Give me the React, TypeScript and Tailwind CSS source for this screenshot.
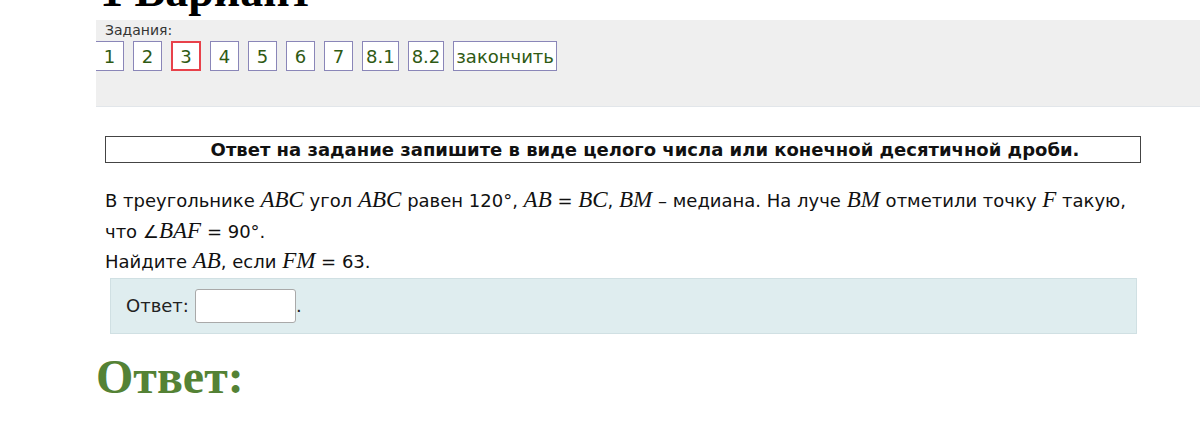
import React from 'react';

const tasks = ['1', '2', '3', '4', '5', '6', '7', '8.1', '8.2'];

function M({ children }: { children: React.ReactNode }) {
  return <i className="font-['Liberation_Serif',serif] text-[23px]">{children}</i>;
}

export default function App() {
  return (
    <div className="w-[1200px] h-[437px] overflow-hidden bg-white pl-[96px]">
      {/* Heading, cut off at the top */}
      <h1 className="h-[52px] -mt-[32px] pl-[4px] text-[46px] font-bold leading-none font-['Liberation_Serif',serif] text-black">
        1 Вариант
      </h1>

      {/* Task navigation */}
      <div className="h-[87px] bg-[#efefef] border-b border-[#e2e6ea] overflow-hidden font-['DejaVu_Sans',sans-serif]">
        <div className="pl-[9px] pt-[1px] text-[14px] leading-[18px] text-[#333]">Задания:</div>
        <div className="flex gap-[9px] mt-[2px] -ml-[1px]">
          {tasks.map((t) => (
            <div
              key={t}
              className={
                t === '3'
                  ? 'h-[30px] min-w-[30px] px-[2px] flex items-center justify-center border-2 border-[#e8414a] text-[18px] text-[#2f5a14] bg-white'
                  : 'h-[30px] min-w-[29px] px-[3px] flex items-center justify-center border border-[#8a86b8] text-[18px] text-[#2f5a14] bg-white'
              }
            >
              {t}
            </div>
          ))}
          <div className="h-[30px] px-[2px] flex items-center justify-center border border-[#8a86b8] text-[18px] text-[#2f5a14] bg-white">
            закончить
          </div>
        </div>
      </div>

      {/* Task body */}
      <div className="pl-[9px] pr-[59px] font-['DejaVu_Sans',sans-serif] text-[#111]">
        <div className="mt-[29px] h-[27px] border border-[#444] flex items-center justify-center pl-[44px] text-[18px] font-bold">
          Ответ на задание запишите в виде целого числа или конечной десятичной дроби.
        </div>
        <div className="mt-[22px] text-[18px] leading-[29.5px]">
          <p>
            В треугольнике <M>ABC</M> угол <M>ABC</M> равен 120°, <M>AB</M> = <M>BC</M>, <M>BM</M> – медиана. На луче <M>BM</M> отметили точку <M>F</M> такую,
          </p>
          <p>
            что ∠<M>BAF</M> = 90°.
          </p>
          <p>
            Найдите <M>AB</M>, если <M>FM</M> = 63.
          </p>
        </div>
        <div className="ml-[5px] mr-[4px] mt-[1px] h-[56px] bg-[#dfedef] border border-[#d0e0e3] flex items-center pl-[15px] text-[18px] text-[#222]">
          <span>Ответ:</span>
          <div className="ml-[6px] w-[101px] h-[34px] bg-white border border-[#a9a9a9] rounded-[3px]" />
          <span>.</span>
        </div>
      </div>

      <div className="mt-[19px] text-[48px] leading-none font-bold font-['Liberation_Serif',serif] text-[#548235]">
        Ответ:
      </div>
    </div>
  );
}
